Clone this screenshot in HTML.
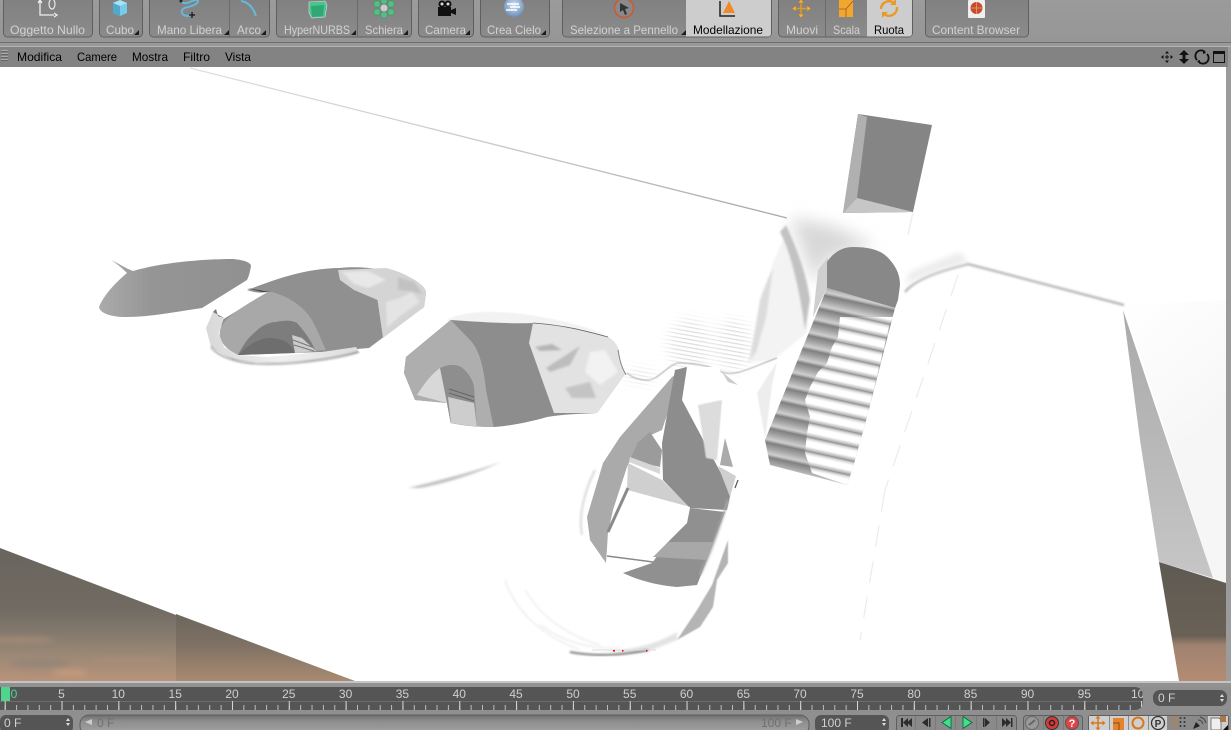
<!DOCTYPE html>
<html><head><meta charset="utf-8"><title>Cinema 4D</title>
<style>
html,body{margin:0;padding:0;width:1231px;height:730px;overflow:hidden;background:#999}
svg{display:block;position:absolute;left:0;top:0}
text{font-family:"Liberation Sans",sans-serif;font-size:12px}
.t{fill:#d2d2d2;text-anchor:middle}
.m{fill:#000}
.r{fill:#cfcfcf;text-anchor:middle}
</style></head><body>
<svg width="1231" height="730" viewBox="0 0 1231 730" xmlns="http://www.w3.org/2000/svg">
<defs>
<filter id="b05" x="-30%" y="-30%" width="160%" height="160%"><feGaussianBlur stdDeviation=".6"/></filter>
<filter id="b1" x="-30%" y="-30%" width="160%" height="160%"><feGaussianBlur stdDeviation="1"/></filter>
<filter id="b3" x="-50%" y="-50%" width="200%" height="200%"><feGaussianBlur stdDeviation="3"/></filter>
<filter id="b6" x="-50%" y="-50%" width="200%" height="200%"><feGaussianBlur stdDeviation="6"/></filter>
<filter id="b8" x="-50%" y="-50%" width="200%" height="200%"><feGaussianBlur stdDeviation="8"/></filter>
<linearGradient id="tb" x1="0" y1="0" x2="0" y2="1"><stop offset="0" stop-color="#9b9b9b"/><stop offset="1" stop-color="#969696"/></linearGradient>
<linearGradient id="btn" x1="0" y1="0" x2="0" y2="1"><stop offset="0" stop-color="#7f7f7f"/><stop offset="1" stop-color="#8b8b8b"/></linearGradient>
<linearGradient id="ridge" gradientUnits="userSpaceOnUse" x1="190" y1="68" x2="787" y2="218"><stop offset="0" stop-color="#e0e0e0"/><stop offset=".6" stop-color="#c4c4c4"/><stop offset="1" stop-color="#a8a8a8"/></linearGradient>
<linearGradient id="sky1" gradientUnits="userSpaceOnUse" x1="0" y1="548" x2="0" y2="681"><stop offset="0" stop-color="#69655e"/><stop offset=".45" stop-color="#706a62"/><stop offset=".65" stop-color="#857a6e"/><stop offset=".8" stop-color="#9a8875"/><stop offset="1" stop-color="#b8937a"/></linearGradient>
<linearGradient id="sky2" gradientUnits="userSpaceOnUse" x1="0" y1="612" x2="0" y2="681"><stop offset="0" stop-color="#6c665c"/><stop offset=".45" stop-color="#7d7064"/><stop offset="1" stop-color="#a88a70"/></linearGradient>
<linearGradient id="sky3" gradientUnits="userSpaceOnUse" x1="0" y1="562" x2="0" y2="681"><stop offset="0" stop-color="#5e5a52"/><stop offset=".62" stop-color="#6a6156"/><stop offset=".7" stop-color="#a08270"/><stop offset="1" stop-color="#b48c72"/></linearGradient>
<linearGradient id="wedge" x1="0" y1="0" x2="0" y2="1"><stop offset="0" stop-color="#aaa"/><stop offset="1" stop-color="#c6c6c6"/></linearGradient>
<linearGradient id="far" gradientUnits="userSpaceOnUse" x1="1130" y1="300" x2="1226" y2="420"><stop offset="0" stop-color="#fff"/><stop offset="1" stop-color="#f6f6f6"/></linearGradient>
<linearGradient id="h1" x1="0" y1="0" x2="1" y2="0"><stop offset="0" stop-color="#ababab"/><stop offset=".35" stop-color="#959595"/><stop offset="1" stop-color="#909090"/></linearGradient>
<linearGradient id="lip" x1="0" y1="0" x2="1" y2="0"><stop offset="0" stop-color="#d8d8d8"/><stop offset=".5" stop-color="#f0f0f0"/><stop offset="1" stop-color="#dcdcdc"/></linearGradient>
<linearGradient id="sGrey" x1="0" y1="0" x2="0" y2="1"><stop offset="0" stop-color="#7d7d7d"/><stop offset=".45" stop-color="#a8a8a8"/><stop offset=".8" stop-color="#cfcfcf"/><stop offset="1" stop-color="#8f8f8f"/></linearGradient>
<linearGradient id="sWhite" x1="0" y1="0" x2="0" y2="1"><stop offset="0" stop-color="#888"/><stop offset=".18" stop-color="#ddd"/><stop offset=".35" stop-color="#fff"/><stop offset=".7" stop-color="#fff"/><stop offset="1" stop-color="#aaa"/></linearGradient>
<pattern id="stairG" width="40" height="14.5" patternUnits="userSpaceOnUse" patternTransform="translate(0,114.3) skewY(12.36)"><rect width="40" height="14.5" fill="url(#sGrey)"/></pattern>
<pattern id="stairW" width="40" height="14.5" patternUnits="userSpaceOnUse" patternTransform="translate(0,114.3) skewY(12.36)"><rect width="40" height="14.5" fill="url(#sWhite)"/></pattern>
<pattern id="stria" width="30" height="4" patternUnits="userSpaceOnUse" patternTransform="rotate(10)"><rect y="2" width="30" height="1.200" fill="#dcdcdc"/></pattern>
<mask id="striaM" maskUnits="userSpaceOnUse" x="620" y="280" width="150" height="110"><g filter="url(#b6)" fill="#fff"><ellipse cx="690" cy="345" rx="22" ry="26"/><ellipse cx="733" cy="345" rx="18" ry="26"/><ellipse cx="640" cy="376" rx="16" ry="6"/></g></mask>
<pattern id="mint" x="4.700" y="705" width="11.364" height="5" patternUnits="userSpaceOnUse"><rect width="1" height="5" fill="#bdbdbd"/></pattern>
<pattern id="majt" x="4.700" y="701" width="56.820" height="9" patternUnits="userSpaceOnUse"><rect width="1" height="9" fill="#d8d8d8"/></pattern>
<linearGradient id="sl" x1="0" y1="0" x2="0" y2="1"><stop offset="0" stop-color="#6d6d6d"/><stop offset=".3" stop-color="#8d8d8d"/><stop offset="1" stop-color="#a5a5a5"/></linearGradient>
<radialGradient id="sky" cx=".5" cy=".4" r=".6"><stop offset="0" stop-color="#cfe0f2"/><stop offset="1" stop-color="#6d8fb8"/></radialGradient>
<clipPath id="vp"><rect x="0" y="67" width="1226" height="614"/></clipPath>
<clipPath id="rul"><path d="M0 687H1134Q1143 687 1143 696V701Q1143 710 1134 710H0Z"/></clipPath>
</defs>

<!-- toolbar -->
<rect width="1231" height="42" fill="url(#tb)"/>
<rect y="42" width="1231" height="1" fill="#6f6f6f"/>
<rect y="43" width="1231" height="3" fill="#999"/>
<rect y="46" width="1231" height="1" fill="#b4b4b4"/>
<rect y="47" width="1228" height="20" fill="#838383"/>
<g fill="url(#btn)" stroke="#5f5f5f">
<rect x="3.500" y="-6" width="89" height="43" rx="4"/>
<rect x="99.500" y="-6" width="43" height="43" rx="4"/>
<rect x="149.500" y="-6" width="120" height="43" rx="4"/>
<rect x="276.500" y="-6" width="135" height="43" rx="4"/>
<rect x="418.500" y="-6" width="55" height="43" rx="4"/>
<rect x="480.500" y="-6" width="69" height="43" rx="4"/>
<rect x="562.500" y="-6" width="209" height="43" rx="4"/>
<rect x="778.500" y="-6" width="134" height="43" rx="4"/>
<rect x="925.500" y="-6" width="103" height="43" rx="4"/>
</g>
<path d="M686 0H771V33Q771 36.500 768 36.500H686Z" fill="#cdcdcd"/>
<path d="M867 0H912V33Q912 36.500 909 36.500H867Z" fill="#cdcdcd"/>
<g stroke="#6b6b6b"><path d="M229.500 0V37M357.500 0V37M825.500 0V37"/></g>
<g fill="#1c1c1c"><path d="M139 30v5h-5zM266 30v5h-5zM229 30v5h-5zM356 30v5h-5zM408 30v5h-5zM470 30v5h-5zM546 30v5h-5zM686 30v5h-5z"/></g>

<g>
<text class="t" x="47.500" y="34" textLength="75" lengthAdjust="spacingAndGlyphs">Oggetto Nullo</text>
<text class="t" x="120" y="34" textLength="28" lengthAdjust="spacingAndGlyphs">Cubo</text>
<text class="t" x="189.500" y="34" textLength="65" lengthAdjust="spacingAndGlyphs">Mano Libera</text>
<text class="t" x="249" y="34" textLength="24" lengthAdjust="spacingAndGlyphs">Arco</text>
<text class="t" x="317" y="34" textLength="66" lengthAdjust="spacingAndGlyphs">HyperNURBS</text>
<text class="t" x="384" y="34" textLength="38" lengthAdjust="spacingAndGlyphs">Schiera</text>
<text class="t" x="445.500" y="34" textLength="41" lengthAdjust="spacingAndGlyphs">Camera</text>
<text class="t" x="514" y="34" textLength="54" lengthAdjust="spacingAndGlyphs">Crea Cielo</text>
<text class="t" x="624" y="34" textLength="108" lengthAdjust="spacingAndGlyphs">Selezione a Pennello</text>
<text class="t" x="728" y="34" textLength="70" lengthAdjust="spacingAndGlyphs" style="fill:#000">Modellazione</text>
<text class="t" x="802" y="34" textLength="32" lengthAdjust="spacingAndGlyphs">Muovi</text>
<text class="t" x="846.500" y="34" textLength="27" lengthAdjust="spacingAndGlyphs">Scala</text>
<text class="t" x="889" y="34" textLength="30" lengthAdjust="spacingAndGlyphs" style="fill:#000">Ruota</text>
<text class="t" x="976" y="34" textLength="88" lengthAdjust="spacingAndGlyphs">Content Browser</text>
</g>

<!-- toolbar icons -->
<path d="M40 1V15H54M54 13l3 2-3 2M38 3l2-3 2 3" fill="none" stroke="#eee" stroke-width="1.300"/>
<ellipse cx="52" cy="4" rx="3" ry="5" fill="none" stroke="#e8e8e8" stroke-width="1.200"/>
<path d="M113 3l7-3 7 3v10l-7 3-7-3z" fill="#78cbe8"/><path d="M113 3l7 3 7-3-7-3z" fill="#a8e2f4"/><path d="M120 6v10l-7-3V3z" fill="#4fa9cc"/>
<path d="M181 1c3 4 7 2 11 0 3-1 6-2 6 0 0 3-6 5-10 6-5 1-7 3-6 6 1 3 7 4 10 1" fill="none" stroke="#67b8d8" stroke-width="2"/><circle cx="181" cy="1" r="1.500" fill="#222"/><path d="M192 12v6M189 15h6" stroke="#111" stroke-width="1.200"/>
<path d="M241 1c7 1 12 6 15 15" fill="none" stroke="#66b8dc" stroke-width="2"/>
<path d="M309 2l16-1 2 4-2 12-13 1-3-5z" fill="#4cc48e" stroke="#ddd" stroke-width=".6"/><path d="M311 6l13-1-1 11-11 1z" fill="#30a874"/>
<g fill="#55c084" stroke="#3a8a5c" stroke-width=".5"><rect x="381" y="-2" width="6" height="6" rx="1.500"/><rect x="388" y="1" width="6" height="6" rx="1.500"/><rect x="388" y="9" width="6" height="6" rx="1.500"/><rect x="381" y="12" width="6" height="6" rx="1.500"/><rect x="374" y="9" width="6" height="6" rx="1.500"/><rect x="374" y="1" width="6" height="6" rx="1.500"/></g><circle cx="384" cy="8" r="3.500" fill="#ccc"/>
<path d="M438 7h13v9h-13zM451 10l5-2v7l-5-2z" fill="#111"/><circle cx="442" cy="4" r="3.500" fill="#111"/><circle cx="448" cy="4" r="3.500" fill="#111"/><circle cx="442" cy="4" r="1.500" fill="#ddd"/><circle cx="448" cy="4" r="1.500" fill="#ddd"/>
<circle cx="514" cy="7" r="10" fill="url(#sky)"/><path d="M507 4h12M510 7h10M506 10h11" stroke="#fff" stroke-width="1.500"/>
<circle cx="624" cy="8" r="9.500" fill="#8a8a8a" stroke="#c0603a" stroke-width="1.800"/><path d="M620 3l9 5-4 1 2 5-2 1-2-5-3 2z" fill="#333"/>
<path d="M720 1V16H735" fill="none" stroke="#222" stroke-width="1.500"/><path d="M723 13l6-12 6 12z" fill="#ee8a2a"/>
<path d="M801 0v17M793 8.500h17" stroke="#e09a2a" stroke-width="1.500"/><path d="M801 -1l-3 4h6zM801 18l-3-4h6zM792 8.500l4-3v6zM811 8.500l-4-3v6z" fill="#efb04a" stroke="#a86e14" stroke-width=".4"/>
<rect x="839" y="0" width="14" height="17" fill="#f2a62e"/><path d="M839 9h7V17M846 9L853 1" stroke="#90621a" fill="none" stroke-width=".8"/>
<path d="M881 9a8 8 0 0 1 13-6M897 7a8 8 0 0 1-13 7" fill="none" stroke="#e89a24" stroke-width="2.400"/><path d="M896 -1v6h-6zM882 18v-6h6z" fill="#e89a24"/>
<rect x="968" y="0" width="17" height="18" rx="1" fill="#efefef"/><circle cx="976.500" cy="8" r="6" fill="#c94c2a"/><path d="M971 8h11M976.500 2v12" stroke="#e8a080" stroke-width=".8"/>

<!-- menu -->
<g fill="#aaa"><path d="M1 50h7v1H1zM1 53h7v1H1zM1 56h7v1H1zM1 59h7v1H1z"/></g>
<g fill="#666"><path d="M1 51h7v1H1zM1 54h7v1H1zM1 57h7v1H1zM1 60h7v1H1z"/></g>
<text class="m" x="17" y="61" textLength="45" lengthAdjust="spacingAndGlyphs">Modifica</text>
<text class="m" x="77" y="61" textLength="40" lengthAdjust="spacingAndGlyphs">Camere</text>
<text class="m" x="132" y="61" textLength="36" lengthAdjust="spacingAndGlyphs">Mostra</text>
<text class="m" x="183" y="61" textLength="27" lengthAdjust="spacingAndGlyphs">Filtro</text>
<text class="m" x="225" y="61" textLength="26" lengthAdjust="spacingAndGlyphs">Vista</text>
<path d="M1167 51l-2 2.500h4zM1167 63l-2-2.500h4zM1161 57l2.500-2v4zM1173 57l-2.500-2v4z" fill="#111"/><path d="M1165 57h4M1167 55v4" stroke="#111"/>
<path d="M1184 50l-5 5h3.500v4H1179l5 5 5-5h-3.500v-4h3.500z" fill="#111"/>
<path d="M1197 60a5.500 5.500 0 0 1 8-8M1207 54a5.500 5.500 0 0 1-8 8" fill="none" stroke="#111" stroke-width="1.800"/><path d="M1203 50l3 3-3 1zM1200 64l-3-3 3-1z" fill="#111"/>
<rect x="1213.500" y="51.500" width="11" height="11" fill="none" stroke="#111"/><rect x="1213" y="51" width="12" height="3" fill="#111"/>

<!-- viewport -->
<rect x="1226" y="67" width="5" height="615" fill="#9b9b9b"/>
<g clip-path="url(#vp)">
<rect x="0" y="67" width="1226" height="615" fill="#fff"/>
<path d="M1124 305L1226 300V583L1213 578Z" fill="url(#far)"/>
<!-- sky -->
<path d="M0 548L176 615V681H0Z" fill="url(#sky1)"/>
<path d="M176 614L355 681H176Z" fill="url(#sky2)"/>
<g filter="url(#b3)" opacity=".55"><ellipse cx="20" cy="640" rx="36" ry="3" fill="#b8957c"/><ellipse cx="40" cy="664" rx="30" ry="4" fill="#87807a"/><ellipse cx="70" cy="673" rx="18" ry="3" fill="#d9a682"/><ellipse cx="130" cy="660" rx="40" ry="3" fill="#ae9078"/></g>
<path d="M1159 562L1226 583V681H1179Z" fill="url(#sky3)"/>
<path d="M1123 310L1213 578L1159 562L1140 440Z" fill="url(#wedge)"/>

<!-- ridge lines -->
<path d="M190 68L560 161L787 218" fill="none" stroke="url(#ridge)" stroke-width="1.300"/>
<path d="M905 292C915 280 935 272 968 264L1124 305" fill="none" stroke="#b0b0b0" stroke-width="2.200" filter="url(#b1)"/>
<path d="M790 218L830 225L875 245L828 258L815 285Z" fill="#d8d8d8" filter="url(#b8)"/>
<path d="M905 285C930 272 950 268 968 262L960 252 910 272Z" fill="#ececec" filter="url(#b3)"/>

<!-- box -->
<path d="M858 114L932 125L913 212L843 213Z" fill="#858585"/>
<path d="M858 114L867 117L857 198L843 213Z" fill="#b0b0b0"/>
<path d="M843 213L857 198L913 212Z" fill="#c6c6c6"/>

<!-- fold -->
<path d="M790 224L808 313L807 333L773 360L747 363L760 313L773 263Z" fill="#f3f3f3" filter="url(#b1)"/>
<path d="M786 225C795 245 806 270 810 300L805 330C800 290 790 250 780 232Z" fill="#c2c2c2" filter="url(#b1)"/>
<path d="M760 300C765 285 770 275 773 268L766 318 756 352 750 360Z" fill="#dcdcdc" filter="url(#b1)"/>
<rect x="620" y="280" width="150" height="110" fill="url(#stria)" mask="url(#striaM)"/>
<path d="M447 320C470 306 540 310 608 335L560 325 450 322Z" fill="#f2f2f2" filter="url(#b05)"/>
<path d="M627 373C635 380 648 382 655 378C665 372 672 362 682 363C700 363 715 368 722 372C735 377 750 368 777 358" fill="none" stroke="#aaa" stroke-width="1" filter="url(#b05)"/>
<path d="M757 393L777 362 772 385 765 440 770 465Z" fill="#ededed" filter="url(#b05)"/>
<path d="M722 372L738 385 728 382Z" fill="#ccc"/>

<!-- arch and stairs -->
<path d="M818 270L828 257L827 288L813 317Z" fill="#cfcfcf"/>
<path d="M827 262C835 250 845 247 853 247C870 247 882 250 890 260C897 268 900 276 900 285L898 300L895 308L827 288Z" fill="#888"/>
<path d="M827 288L765 440L770 465L847 485L853 467L867 417L895 308Z" fill="url(#stairG)"/>
<path d="M840 317L838 337L832 347L827 363L818 372L810 387L805 400L810 417L807 433L805 453L812 473L847 485L853 467L867 417L890 323L893 317Z" fill="url(#stairW)"/>

<!-- hole 1 -->
<path d="M99 307C104 295 115 283 127 273C122 268 116 263 111 260C118 263 125 268 133 271C160 263 200 259 233 259C245 260 251 263 251 266C250 272 249 276 247 280L202 308C175 312 150 317 126 317C110 317 100 313 99 307Z" fill="url(#h1)"/>

<!-- hole 2 -->
<path d="M247 290C262 285 300 268 340 268C360 266 385 268 411 278C420 283 426 288 426 293L424 307L369 348L322 352L238 355L220 337L222 320L268 292C262 293 255 293 247 290Z" fill="#909090"/>
<path d="M220 337C218 325 225 316 268 292L272 292C290 297 304 307 312 320C319 333 322 342 326 350L238 355C228 350 222 345 220 337Z" fill="#a8a8a8"/>
<path d="M238 355C243 345 248 338 254 333C262 325 270 322 276 322C285 320 292 320 297 323C305 332 312 342 315 350Z" fill="#7d7d7d"/>
<path d="M238 355C246 347 258 338 270 338C285 338 292 345 295 353Z" fill="#6e6e6e"/>
<path d="M292 335L302 338 316 351 295 353Z" fill="#ccc"/><path d="M293 340L312 347M294 345L314 351" stroke="#777" stroke-width="1"/>
<path d="M338 270L386 268C395 270 405 274 411 278C420 283 426 288 426 293L424 307L383 338L377.500 300L354 290L340 280Z" fill="#d4d4d4"/>
<g filter="url(#b1)"><path d="M342 272L368 271 386 280 368 288 354 284Z" fill="#e8e8e8"/><path d="M386 302L400 298 412 292 420 302 400 316 387 328Z" fill="#e4e4e4"/><path d="M398 277L414 282 423 294 410 291 398 290Z" fill="#c2c2c2"/></g>
<path d="M213 312L206 328L211 347L233 360L268 363L312 361L360 353L356 347L322 352L268 357L238 355L224 347L218.600 333L224 318Z" fill="url(#lip)"/>
<path d="M211 347C220 358 240 364 268 364C300 364 340 358 358 352" fill="none" stroke="#777" stroke-width="1.200" filter="url(#b1)"/>
<path d="M247 288L270 292 262 292Z" fill="#444"/>
<path d="M213 312L216 309 218 316 224 318Z" fill="#777"/>

<!-- hole 3 -->
<path d="M406 357L450.700 320C480 322 510 324 533 323C565 325 590 332 608 337C614 341 617 345 618.600 350C620 360 622 368 625.700 373L597 413C580 414 565 414 547 417C530 422 510 426 493.600 427C480 427 465 426 450.700 423L447 403L415 400L404 373Z" fill="#8d8d8d"/>
<path d="M406 357L450.700 320L470 340C480 350 484 370 486 390L493.600 427C480 427 465 426 450.700 423L447 403L415 400L404 373Z" fill="#aeaeae"/>
<path d="M417 395C425 382 432 374 440 368L455 403L447 403Z" fill="#d8d8d8"/>
<path d="M440 368C448 364 456 364 461 367C468 372 473 380 474 387L477 427L450.700 423L447 403Z" fill="#8e8e8e"/>
<path d="M448 397L474 403L477 427L451 423Z" fill="#cdcdcd"/>
<path d="M449 389L474 397M449 393L474 401" stroke="#666" stroke-width="1"/>
<path d="M533 323C565 325 590 332 608 337C614 341 617 345 618.600 350C620 360 622 368 625.700 373L597 413L554 413L529 343Z" fill="#e2e2e2"/>
<g filter="url(#b1)"><path d="M535 347L552 344 562 350 540 351Z" fill="#b5b5b5"/><path d="M546 368L580 346 570 365 550 372Z" fill="#bdbdbd"/><path d="M590 352L605 350 618 372 600 385 585 372Z" fill="#f2f2f2"/><path d="M565 388L590 382 596 398 572 398Z" fill="#c4c4c4"/></g>
<path d="M533 323C565 325 590 332 608 337" fill="none" stroke="#666" stroke-width=".8"/>
<path d="M618 350C620 362 622 368 626 375" fill="none" stroke="#888" stroke-width="1"/>

<!-- teardrop -->
<path d="M667 377L622 433L603 463L587 517L590 540L607 563L630 575L667 587L697 585L713 553L733 497L738 480L720 463L723 400L720 367L687 367Z" fill="#fff"/>
<path d="M672 377L620 437L603 463L587 517L590 540L606 563L608 533L613 510L627 467L640 440L662 430L682 370Z" fill="#aaa"/>
<path d="M650 432L662 450L660 467L630 460L638 442Z" fill="#9b9b9b"/>
<path d="M630 457L660 468 660 474 629 462Z" fill="#d6d6d6"/>
<path d="M628 463L662 480L690 507L627 490Z" fill="#cfcfcf"/>
<path d="M675 370L687 367L682 400L731 492L727 510L690 508L663 480L662 443Z" fill="#8d8d8d"/>
<path d="M698 405L722 400 717 460 706 458Z" fill="#dcdcdc" filter="url(#b05)"/>
<path d="M725 438L733 467 720 465Z" fill="#aaa"/>
<path d="M718 466L736 476 730 497Z" fill="#cfcfcf"/>
<path d="M627 490L690 507L687 523L667 543L652 560L607 555L608 533Z" fill="#fff"/>
<path d="M690 508L725 512L707 560L697 585L677 587C655 585 638 580 623 573L652 563L667 543L687 523Z" fill="#909090"/>
<path d="M668 542L713 542L707 560L653 557Z" fill="#a8a8a8"/>
<path d="M607 556L653 562" stroke="#888" stroke-width="1.500" fill="none"/>
<path d="M628 488L608 532" stroke="#8a8a8a" stroke-width="3" fill="none"/>
<path d="M738 480L735 488" stroke="#555" stroke-width="1.200"/>
<path d="M728 500C722 520 712 550 700 575" fill="none" stroke="#aaa" stroke-width="2" filter="url(#b1)"/>
<path d="M595 470C585 490 578 515 582 535" fill="none" stroke="#ccc" stroke-width="1.500" filter="url(#b1)"/>

<!-- swoosh -->
<path d="M728 540L728 563L717 580L713 607L700 627L677 640L697 610L712 585Z" fill="#b4b4b4" filter="url(#b05)"/>
<path d="M677 640L647 652L600 652C630 650 655 645 677 632Z" fill="#d8d8d8" opacity=".7" filter="url(#b1)"/>
<path d="M505 580C515 610 540 635 580 650M525 590C540 615 565 635 600 645M540 625C560 640 590 650 620 648" fill="none" stroke="#e8e8e8" stroke-width="1.200" filter="url(#b1)"/>
<path d="M570 652C595 657 625 655 648 650" fill="none" stroke="#555" stroke-width="1.600" filter="url(#b1)"/>
<path d="M592 650H656" stroke="#ddd" stroke-width="1"/>
<path d="M613 650h2v1.500h-2zM622 650h1.500v1.500h-1.500zM646 650h1.500v1.500h-1.500z" fill="#e00"/>
<path d="M408 488C440 480 480 470 500 462C480 473 440 485 420 488Z" fill="#c4c4c4" filter="url(#b1)"/>

<!-- thin cracks -->
<path d="M958 275L885 490M885 490L860 640" fill="none" stroke="#e8e8e8" stroke-width="1" stroke-dasharray="22 14"/>
<path d="M913 212L908 235" stroke="#eee" stroke-width="1.500"/>
</g>

<!-- timeline -->
<rect y="681" width="1231" height="49" fill="#8f8f8f"/>
<rect y="681" width="1231" height="2" fill="#c4c4c4"/>
<rect y="683" width="1231" height="4" fill="#929292"/>
<g clip-path="url(#rul)">
<rect y="687" width="1143" height="23" fill="#555"/>
<rect y="701" width="1143" height="1" fill="#6c6c6c"/>
<rect y="705" width="1143" height="5" fill="url(#mint)"/>
<rect y="701" width="1143" height="9" fill="url(#majt)"/>
<rect x="1" y="687" width="9" height="14" fill="#4fd68c"/>
<text class="r" x="14" y="698" style="fill:#4fd68c">0</text>
<text class="r" x="61.500" y="698">5</text><text class="r" x="118.300" y="698">10</text><text class="r" x="175.200" y="698">15</text><text class="r" x="232" y="698">20</text><text class="r" x="288.800" y="698">25</text><text class="r" x="345.600" y="698">30</text><text class="r" x="402.400" y="698">35</text><text class="r" x="459.300" y="698">40</text><text class="r" x="516" y="698">45</text><text class="r" x="573" y="698">50</text><text class="r" x="629.700" y="698">55</text><text class="r" x="686.500" y="698">60</text><text class="r" x="743.400" y="698">65</text><text class="r" x="800" y="698">70</text><text class="r" x="857" y="698">75</text><text class="r" x="914" y="698">80</text><text class="r" x="970.600" y="698">85</text><text class="r" x="1027.500" y="698">90</text><text class="r" x="1084.300" y="698">95</text><text class="r" x="1141" y="698">100</text>
</g>
<rect x="1153" y="690" width="74" height="16" rx="7" fill="#555"/>
<text x="1158" y="702" style="fill:#d0d0d0">0 F</text>
<path d="M1222 694l-2 3h4zM1222 702l-2-3h4z" fill="#ddd"/>

<!-- row 2 -->
<rect x="0" y="715" width="73" height="18" rx="6" fill="#555"/>
<text x="4" y="727" style="fill:#d0d0d0">0 F</text>
<path d="M68 718l-2 3h4zM68 726l-2-3h4z" fill="#ddd"/>
<rect x="80" y="715" width="729" height="20" rx="9" fill="url(#sl)" stroke="#5f5f5f"/>
<path d="M85 722l7-3v6z" fill="#ccc"/><path d="M803 722l-7-3v6z" fill="#ccc"/>
<text x="97" y="727" style="fill:#707070">0 F</text>
<text x="761" y="727" style="fill:#707070">100 F</text>
<rect x="815" y="715" width="74" height="18" rx="6" fill="#555"/>
<text x="821" y="727" style="fill:#d0d0d0">100 F</text>
<path d="M884 718l-2 3h4zM884 726l-2-3h4z" fill="#ddd"/>

<rect x="896.500" y="715.500" width="120" height="18" rx="3" fill="#8a8a8a" stroke="#5f5f5f"/>
<path d="M915.500 716v14M935.500 716v14M955.500 716v14M976.500 716v14M996.500 716v14" stroke="#7a7a7a"/>
<rect x="1023.500" y="715.500" width="59" height="18" rx="3" fill="#8a8a8a" stroke="#5f5f5f"/>
<path d="M1043.500 716v14M1063.500 716v14" stroke="#7a7a7a"/>
<rect x="1088.500" y="715.500" width="140" height="18" rx="2" fill="#8a8a8a" stroke="#5f5f5f"/>
<rect x="1089" y="716" width="20" height="14" fill="#cfcfcf"/><rect x="1110" y="716" width="18" height="14" fill="#cfcfcf"/><rect x="1129" y="716" width="19" height="14" fill="#cfcfcf"/><rect x="1149" y="716" width="18" height="14" fill="#cfcfcf"/><rect x="1208" y="716" width="20" height="14" fill="#cfcfcf"/>

<g fill="#2c2c2c">
<path d="M901 718h2v9h-2zM908 718v9l-5-4.500zM912 718v9l-5-4.500z"/>
<path d="M928 718v9l-6-4.500zM929 718h1.500v9H929z"/>
<path d="M983 718h1.500v9H983zM985 718l5 4.500-5 4.500z"/>
<path d="M1002 718l5 4.500-5 4.500zM1006 718l5 4.500-5 4.500zM1011 718h1.500v9H1011z"/>
</g>
<path d="M942 722.500l9-6v12z" fill="#3ee08a" stroke="#063" stroke-width=".8"/>
<path d="M963 716.500l9 6-9 6z" fill="#3ee08a" stroke="#063" stroke-width=".8"/>
<circle cx="1032" cy="723" r="6.500" fill="#999" stroke="#6a6a6a"/><path d="M1029 725l6-5" stroke="#666" stroke-width="2"/>
<circle cx="1052" cy="723" r="6.500" fill="#d63a3a" stroke="#333"/><circle cx="1052" cy="723" r="2.500" fill="none" stroke="#222" stroke-width="1.500"/>
<circle cx="1072" cy="723" r="6.500" fill="#e04444" stroke="#555"/><text x="1072" y="727" style="font-size:11px;font-weight:bold;fill:#fff;text-anchor:middle">?</text>
<path d="M1098 717v12M1092 723h12" stroke="#d8771f" stroke-width="1.500"/><path d="M1098 715.500l-2.500 3h5zM1098 730.500l-2.500-3h5zM1090.500 723l3-2.500v5zM1105.500 723l-3-2.500v5z" fill="#d8771f"/>
<rect x="1113" y="718" width="11" height="12" fill="#e8822a"/><path d="M1113 723h6v7" fill="none" stroke="#8a4c12"/>
<circle cx="1138" cy="723" r="5.500" fill="none" stroke="#d8771f" stroke-width="2"/>
<circle cx="1158" cy="723" r="6.500" fill="none" stroke="#333" stroke-width="1.300"/><text x="1158" y="727" style="font-size:10px;font-weight:bold;fill:#333;text-anchor:middle">P</text>
<g fill="#d8771f"><circle cx="1172.500" cy="718" r="1"/><circle cx="1176.500" cy="718" r="1"/><circle cx="1172.500" cy="722" r="1"/><circle cx="1176.500" cy="722" r="1"/><circle cx="1172.500" cy="726" r="1"/><circle cx="1176.500" cy="726" r="1"/></g><g fill="#333"><circle cx="1180.500" cy="718" r="1"/><circle cx="1184.500" cy="718" r="1"/><circle cx="1180.500" cy="722" r="1"/><circle cx="1184.500" cy="722" r="1"/><circle cx="1180.500" cy="726" r="1"/><circle cx="1184.500" cy="726" r="1"/></g>
<path d="M1193 729l3-7 4 4z" fill="#222"/><path d="M1198 720a5 5 0 0 1 5 4M1200 717a8 8 0 0 1 6 6" fill="none" stroke="#444"/>
<path d="M1211 718h8l2 2v10h-10z" fill="#eee" stroke="#555" stroke-width=".7"/><rect x="1220" y="716" width="6" height="6" fill="#a8784a"/><path d="M1228 725v5h-5z" fill="#111"/>
</svg>
</body></html>
